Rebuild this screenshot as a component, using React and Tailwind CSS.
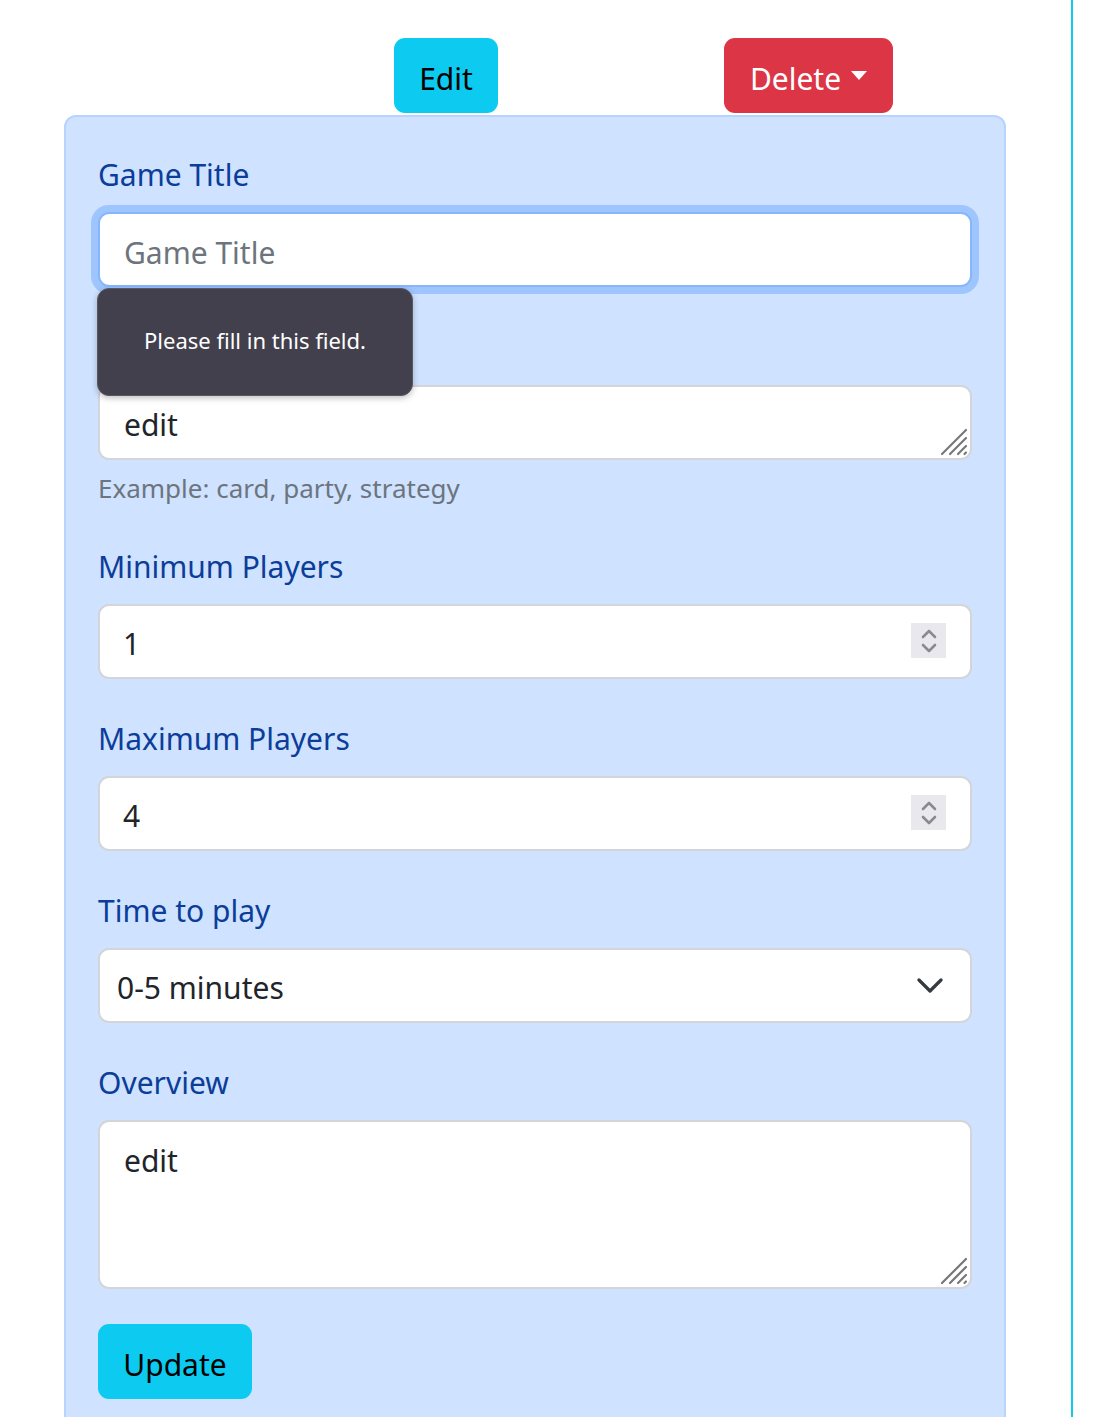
import React from 'react';

const font = { fontFamily: '"Noto Sans", "Open Sans", sans-serif' };

const Label = ({ children }) => (
    <label className="block text-[30px] leading-[45px] mb-[15px] text-[#0b3d99]">{children}</label>
);

const Resize = () => (
    <svg className="absolute right-[4px] bottom-[4px]" width="28" height="28" viewBox="0 0 28 28">
        <g stroke="#777" strokeWidth="2.2" strokeLinecap="round">
            <line x1="2" y1="26" x2="26" y2="2" />
            <line x1="10" y1="26" x2="26" y2="10" />
            <line x1="18" y1="26" x2="26" y2="18" />
            <line x1="24.5" y1="26" x2="26" y2="24.5" />
        </g>
    </svg>
);

const Spinner = () => (
    <div className="absolute right-[26px] top-[19px] w-[35px] h-[35px] bg-[#e9e9ed] flex items-center justify-center">
        <svg width="18" height="28" viewBox="0 0 18 28" fill="none" stroke="#8b8a94" strokeWidth="2.6" strokeLinecap="round" strokeLinejoin="round">
            <polyline points="3,10 9,4 15,10" />
            <polyline points="3,18 9,24 15,18" />
        </svg>
    </div>
);

const NumberField = ({ label, value }) => (
    <div className="mb-[37px]">
        <Label>{label}</Label>
        <div className="relative">
            <input
                readOnly
                value={value}
                className="block w-full h-[75px] bg-white border-2 border-[#d3d5d8] rounded-[11px] pl-[23px] pt-[4px] text-[30px] text-[#212529] outline-none"
            />
            <Spinner />
        </div>
    </div>
);

export default function App() {
    return (
        <div className="flex min-h-[1417px] bg-white" style={font}>
            <div className="w-[1071px] shrink-0">
                <div className="flex pt-[38px] pl-[394px]">
                    <button className="w-[104px] h-[75px] pt-[5px] rounded-[11px] bg-[#0dcaf0] text-black text-[30px]">Edit</button>
                    <button className="ml-[226px] w-[169px] h-[75px] pt-[5px] rounded-[11px] bg-[#dc3545] text-white text-[30px] flex items-center justify-center gap-[10px]">
                        Delete
                        <svg className="-mt-[5px]" width="16" height="9" viewBox="0 0 16 9"><polygon points="0,0 16,0 8,9" fill="#fff" /></svg>
                    </button>
                </div>

                <div className="ml-[64px] mt-[2px] w-[942px] min-h-[1310px] bg-[#cfe2ff] border-2 border-[#b6d4fe] border-b-0 rounded-t-[12px] px-[32px] pt-[35px] pb-[40px]">
                    <div className="mb-[38px]">
                        <Label>Game Title</Label>
                        <input
                            placeholder="Game Title"
                            className="block w-full h-[75px] bg-white border-2 border-[#86b7fe] rounded-[11px] pl-[24px] pt-[5px] text-[30px] text-[#212529] placeholder:text-[#6c757d] outline-none shadow-[0_0_0_7px_#9ec5fe]"
                        />
                    </div>

                    <div className="relative">
                        <Label>Genre</Label>
                        <div className="relative">
                            <textarea
                                readOnly
                                value="edit"
                                rows={1}
                                className="block w-full h-[75px] bg-white border-2 border-[#d3d5d8] rounded-[11px] px-[24px] pt-[15px] pb-[10px] text-[30px] leading-[45px] text-[#212529] outline-none resize-none overflow-hidden"
                            />
                            <Resize />
                        </div>
                        <div className="absolute left-[-1px] top-[-37px] w-[316px] h-[108px] pb-[4px] bg-[#43404d] border border-[#5a5763] rounded-[12px] flex items-center justify-center text-white text-[22px] shadow-[0_2px_6px_rgba(0,0,0,0.25)]">
                            Please fill in this field.
                        </div>
                    </div>
                    <div className="mt-[9px] mb-[36px] text-[26px] leading-[39px] text-[#6c757d]">Example: card, party, strategy</div>

                    <NumberField label="Minimum Players" value="1" />
                    <NumberField label="Maximum Players" value="4" />

                    <div className="mb-[37px]">
                        <Label>Time to play</Label>
                        <div className="relative h-[75px] bg-white border-2 border-[#d3d5d8] rounded-[11px] pl-[17px] pt-[4px] flex items-center text-[30px] text-[#212529]">
                            0-5 minutes
                            <svg className="absolute right-[27px] top-[28px]" width="26" height="16" viewBox="0 0 26 16" fill="none" stroke="#343a40" strokeWidth="3.2" strokeLinecap="round" strokeLinejoin="round">
                                <polyline points="2,2 13,13 24,2" />
                            </svg>
                        </div>
                    </div>

                    <div className="mb-[35px]">
                        <Label>Overview</Label>
                        <div className="relative">
                            <textarea
                                readOnly
                                value="edit"
                                className="block w-full h-[169px] bg-white border-2 border-[#d3d5d8] rounded-[11px] px-[24px] py-[16px] text-[30px] leading-[45px] text-[#212529] outline-none resize-none"
                            />
                            <Resize />
                        </div>
                    </div>

                    <button className="w-[154px] h-[75px] pt-[5px] rounded-[11px] bg-[#0dcaf0] text-black text-[30px]">Update</button>
                </div>
            </div>
            <div className="w-[2px] shrink-0 bg-[#0dcaf0]" />
        </div>
    );
}
